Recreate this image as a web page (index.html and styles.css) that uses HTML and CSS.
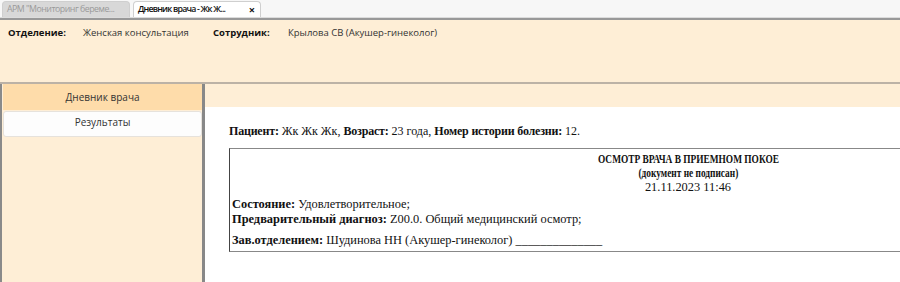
FILE: index.html
```
<!DOCTYPE html>
<html lang="ru">
<head>
    <meta charset="UTF-8">
    <title>Дневник врача</title>
    <link rel="stylesheet" href="styles.css">
</head>
<body>
    <div class="tabs">
        <div class="tab">АРМ "Мониторинг береме...</div>
        <div class="tab active">Дневник врача - Жк Ж...<span class="close">×</span></div>
    </div>
    <div class="header">
        <span class="label">Отделение:</span>
        <span class="value">Женская консультация</span>
        <span class="label">Сотрудник:</span>
        <span class="value">Крылова СВ (Акушер-гинеколог)</span>
    </div>
    <div class="main">
        <div class="sidebar">
            <div class="menu-item selected">Дневник врача</div>
            <div class="menu-item">Результаты</div>
        </div>
        <div class="content">
            <div class="strip"></div>
            <div class="report">
                <p class="patient"><b>Пациент:</b> Жк Жк Жк, <b>Возраст:</b> 23 года, <b>Номер истории болезни:</b> 12.</p>
                <div class="doc">
                    <div class="doc-title"><b>ОСМОТР ВРАЧА В ПРИЕМНОМ ПОКОЕ</b></div>
                    <div class="doc-title"><b>(документ не подписан)</b></div>
                    <div class="doc-title">21.11.2023 11:46</div>
                    <div class="doc-line first"><b>Состояние:</b> Удовлетворительное;</div>
                    <div class="doc-line"><b>Предварительный диагноз:</b> Z00.0. Общий медицинский осмотр;</div>
                    <div class="doc-line sign"><b>Зав.отделением:</b> Шудинова НН (Акушер-гинеколог) ______________</div>
                </div>
            </div>
        </div>
    </div>
</body>
</html>
```

FILE: styles.css
```
html, body {
    margin: 0;
    height: 100%;
    overflow: hidden;
}

body {
    font-family: "Open Sans", "Noto Sans", sans-serif;
    font-size: 9.5px;
    color: #333;
    background-color: #fff;
    display: flex;
    flex-direction: column;
}

.tabs {
    height: 17px;
    background-color: #f7f7f7;
    border-bottom: 1px solid #dcdcdc;
    display: flex;
    align-items: flex-end;
    padding-left: 2px;
    gap: 3px;
}

.tab {
    width: 122px;
    height: 15px;
    line-height: 15px;
    padding-left: 4px;
    background-color: #d8d8d8;
    color: #9a9a9a;
    border: 1px solid #cfcfcf;
    border-bottom: none;
    border-radius: 4px 4px 0 0;
    display: flex;
    white-space: nowrap;
    font-size: 8.8px;
    letter-spacing: -0.5px;
}

.tab.active {
    background-color: #fff;
    color: #111;
    font-weight: 600;
    letter-spacing: -0.8px;
}

.close {
    margin-left: auto;
    margin-right: 5px;
    font-weight: bold;
    font-size: 11px;
    letter-spacing: 0;
}

.header {
    background-color: #feeed6;
    border-top: 2px solid #999;
    border-bottom: 2px solid #bcb2a6;
    padding: 6px 8px 0;
    box-sizing: border-box;
    height: 66px;
    display: flex;
    align-items: flex-start;
    white-space: nowrap;
}

.header .label {
    font-weight: bold;
    color: #111;
    width: 75px;
}

.header .value {
    width: 130px;
    color: #333;
}

.main {
    flex: 1;
    display: flex;
    background-color: #feeed6;
}

.sidebar {
    width: 199px;
    border-left: 2px solid #8a8a8a;
    padding-left: 1px;
    display: flex;
    flex-direction: column;
    gap: 1px;
}

.menu-item {
    height: 24px;
    line-height: 21px;
    text-align: center;
    background-color: #fdfdfd;
    border: 1px solid #e6e2dc;
    border-radius: 3px;
    color: #333;
    font-size: 10px;
}

.menu-item.selected {
    background-color: #fedcaa;
    border-color: #fedcaa;
    border-radius: 0;
    line-height: 24px;
}

.content {
    flex: 1;
    border-left: 3px solid #888;
    display: flex;
    flex-direction: column;
    overflow: hidden;
}

.strip {
    height: 23px;
    background-color: #feeed6;
}

.report {
    flex: 1;
    background-color: #fff;
    padding: 17px 24px 0;
    font-family: "Liberation Serif", serif;
    font-size: 12px;
    line-height: 14px;
    color: #111;
}

.patient {
    margin: 0 0 10px;
}

.patient b {
    letter-spacing: -0.2px;
}

.doc {
    width: 912px;
    border: 1px solid #444;
    border-top-color: #888;
    border-bottom-color: #888;
    padding: 3px 0 3px 2px;
    font-size: 12.4px;
    line-height: 14px;
}

.doc-title {
    text-align: center;
}

.doc-title b {
    display: inline-block;
    font-size: 13.2px;
    transform: scaleX(0.71);
}

.doc-line {
    line-height: 15px;
}

.doc-line.first {
    margin-top: 3px;
}

.doc-line.sign {
    margin-top: 6px;
}
```
